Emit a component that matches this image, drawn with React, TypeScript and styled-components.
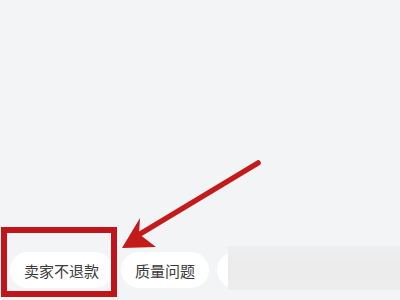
import React from "react";
import styled, { createGlobalStyle } from "styled-components";

const Global = createGlobalStyle`
  html, body { margin: 0; padding: 0; }
  body { background: #f3f4f6; font-family: "Noto Sans CJK SC", "Noto Sans", sans-serif; }
`;

const Page = styled.div`
  position: relative;
  width: 400px;
  height: 300px;
  overflow: hidden;
  background: #f3f4f6;
`;

const ChipRow = styled.div`
  display: flex;
  gap: 8px;
  padding: 252px 0 0 10px;
  white-space: nowrap;
`;

const Chip = styled.div`
  flex: none;
  height: 36px;
  padding: 0 14px;
  border-radius: 18px;
  background: #ffffff;
  display: flex;
  align-items: center;
  font-size: 15px;
  color: #3a3a3a;
  line-height: 1;
`;

const Mosaic = styled.div`
  position: absolute;
  left: 228px;
  top: 246px;
  width: 180px;
  height: 44px;
  background: linear-gradient(180deg, #eeeeee 0%, #ebebeb 50%, #ededed 100%);
  filter: blur(0.6px);
`;

const Highlight = styled.div`
  position: absolute;
  left: 1px;
  top: 227px;
  width: 116px;
  height: 70px;
  box-sizing: border-box;
  border: 6px solid #c0161b;
`;

const Arrow = styled.svg`
  position: absolute;
  left: 0;
  top: 0;
  pointer-events: none;
`;

export default function App() {
  return (
    <Page>
      <Global />
      <ChipRow>
        <Chip>卖家不退款</Chip>
        <Chip>质量问题</Chip>
        <Chip>商品与描述不符</Chip>
      </ChipRow>
      <Mosaic />
      <Highlight />
      <Arrow width="400" height="300" viewBox="0 0 400 300">
        <line x1="258" y1="163" x2="135" y2="237" stroke="#c41a1a" strokeWidth="5.5" strokeLinecap="round" />
        <polygon points="122,248 140,218 139,234 156,247" fill="#c41a1a" />
      </Arrow>
    </Page>
  );
}
